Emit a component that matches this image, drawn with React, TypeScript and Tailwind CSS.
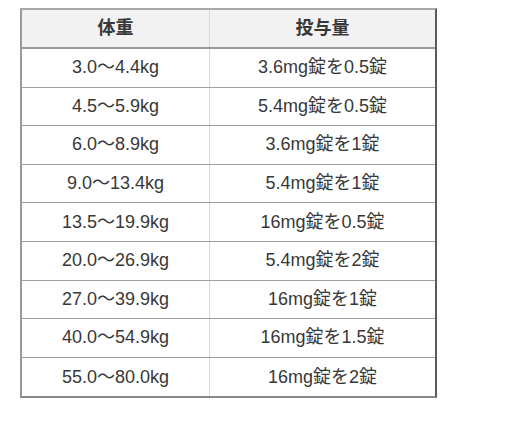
const rows: [string, string][] = [
  ['3.0〜4.4kg', '3.6mg錠を0.5錠'],
  ['4.5〜5.9kg', '5.4mg錠を0.5錠'],
  ['6.0〜8.9kg', '3.6mg錠を1錠'],
  ['9.0〜13.4kg', '5.4mg錠を1錠'],
  ['13.5〜19.9kg', '16mg錠を0.5錠'],
  ['20.0〜26.9kg', '5.4mg錠を2錠'],
  ['27.0〜39.9kg', '16mg錠を1錠'],
  ['40.0〜54.9kg', '16mg錠を1.5錠'],
  ['55.0〜80.0kg', '16mg錠を2錠'],
];

export default function App() {
  return (
    <div
      className="w-[512px] h-[446px] bg-white pt-[8px] pl-[20px]"
      style={{ fontFamily: '"Liberation Sans", "Noto Sans CJK JP", sans-serif' }}
    >
      <div className="w-[417px] border-t-2 border-l-2 border-b-2 border-r-2 border-t-[#a8a8a8] border-l-[#9a9a9a] border-b-[#8a8a8a] border-r-[#5a5a5a] text-[18px] text-[#383838]">
        {/* Header */}
        <div className="flex h-[39px] bg-[#f2f2f2] border-b-2 border-[#9a9a9a] font-bold">
          <div className="w-[188px] flex items-center justify-center border-r border-[#d8d8d8]">体重</div>
          <div className="flex-1 flex items-center justify-center">投与量</div>
        </div>
        {rows.map(([w, d], i) => (
          <div
            key={i}
            className={`flex h-[38.6px] ${i < rows.length - 1 ? 'border-b border-[#a0a0a0]' : ''}`}
          >
            <div className="w-[188px] flex items-center justify-center border-r border-[#d8d8d8]">{w}</div>
            <div className="flex-1 flex items-center justify-center">{d}</div>
          </div>
        ))}
      </div>
    </div>
  );
}
